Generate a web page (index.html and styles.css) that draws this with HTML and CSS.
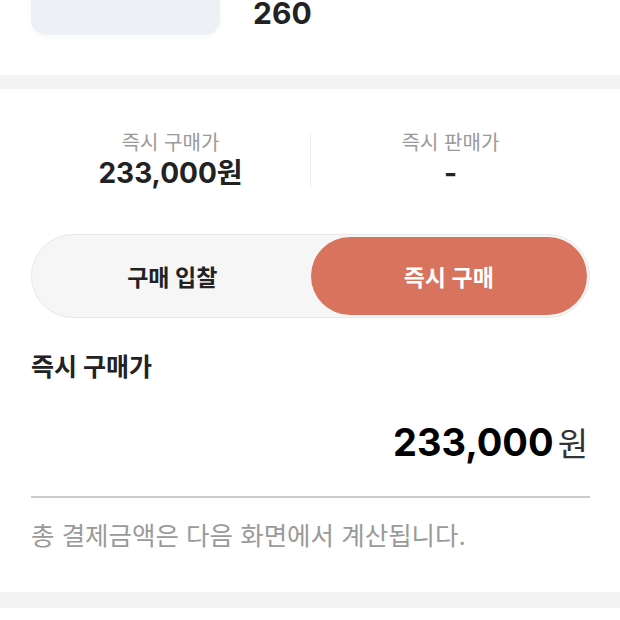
FILE: index.html
```html
<!DOCTYPE html>
<html lang="ko">
<head>
    <meta charset="UTF-8">
    <meta name="viewport" content="width=device-width, initial-scale=1.0">
    <title>즉시 구매</title>
    <link rel="stylesheet" href="styles.css">
</head>
<body>
    <div id="product">
        <div id="product-thumb"></div>
        <div id="product-info">
            <p id="product-size">260</p>
        </div>
    </div>
    <div class="divider-band"></div>
    <div id="container">
        <div id="price-stats">
            <div class="stat">
                <p class="stat-label">즉시 구매가</p>
                <p class="stat-value">233,000원</p>
            </div>
            <div class="stat-line"></div>
            <div class="stat">
                <p class="stat-label">즉시 판매가</p>
                <p class="stat-value">-</p>
            </div>
        </div>
        <div id="toggle">
            <button class="toggle-btn">구매 입찰</button>
            <button class="toggle-btn active">즉시 구매</button>
        </div>
        <h2 id="title-price">즉시 구매가</h2>
        <div id="price-row">
            <span id="price">233,000</span><span id="price-unit">원</span>
        </div>
        <p id="price-note">총 결제금액은 다음 화면에서 계산됩니다.</p>
    </div>
    <div class="divider-band"></div>
</body>
</html>
```
FILE: styles.css
```css
:root{
    --text-color: #222222;
    --muted-color: #9a9a9a;
    --accent-color: #d8735d;
    --band-color: #f4f4f4;
}

*{
    font-family: 'Inter', 'Noto Sans CJK KR', sans-serif;
    box-sizing: border-box;
    margin: 0;
}

body{
    background-color: white;
    color: var(--text-color);
    overflow: hidden;
}

#product{
    margin-top: -90px;
    padding: 0 31px 40px;
    display: flex;
    gap: 33px;
}

#product-thumb{
    width: 189px;
    height: 125px;
    border-radius: 15px;
    background-color: #edf0f5;
    box-shadow: 0 2px 6px rgba(0, 0, 0, 0.03);
}

#product-info{
    display: flex;
    flex-direction: column;
    justify-content: flex-end;
    padding-bottom: 9px;
}

#product-size{
    font-size: 30px;
    font-weight: 700;
    line-height: 26px;
}

.divider-band{
    height: 14px;
    background-color: var(--band-color);
}

.divider-band:last-child{
    height: 16px;
}

#container{
    padding: 42px 30px 42px 31px;
    display: flex;
    flex-direction: column;
}

#price-stats{
    display: grid;
    grid-template-columns: 1fr 1px 1fr;
    align-items: center;
}

.stat{
    display: flex;
    flex-direction: column;
    align-items: center;
    gap: 1px;
}

.stat-label{
    font-size: 20px;
    line-height: 24px;
    color: var(--muted-color);
}

.stat-value{
    font-size: 28px;
    line-height: 34px;
    font-weight: 700;
}

.stat-line{
    height: 53px;
    background-color: #ececec;
}

#toggle{
    margin-top: 44px;
    height: 84px;
    padding: 2px;
    border: 1px solid #e8e8e8;
    border-radius: 42px;
    background-color: #f6f6f6;
    display: grid;
    grid-template-columns: 1fr 1fr;
}

.toggle-btn{
    border: none;
    border-radius: 40px;
    background: transparent;
    font-size: 23px;
    font-weight: 700;
    color: var(--text-color);
}

.toggle-btn.active{
    background-color: var(--accent-color);
    color: white;
}

#title-price{
    margin-top: 34px;
    font-size: 25px;
    line-height: 30px;
    font-weight: 700;
}

#price-row{
    margin-top: 36px;
    display: flex;
    justify-content: flex-end;
    align-items: baseline;
    gap: 4px;
    padding-right: 2px;
    padding-bottom: 30px;
    border-bottom: 2px solid #cccccc;
}

#price{
    font-size: 38px;
    line-height: 46px;
    font-weight: 700;
    color: black;
}

#price-unit{
    font-size: 33px;
    color: #333;
}

#price-note{
    margin-top: 24px;
    font-size: 25.5px;
    line-height: 28px;
    color: var(--muted-color);
}
```
